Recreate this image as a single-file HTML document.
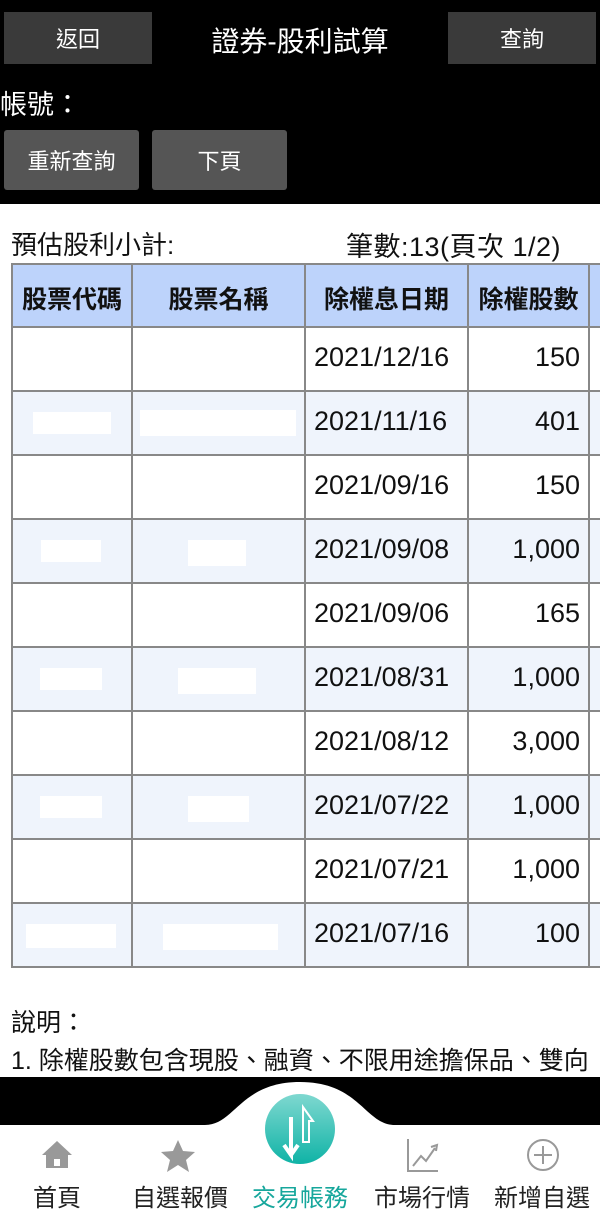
<!DOCTYPE html>
<html><head><meta charset="utf-8"><style>
*{margin:0;padding:0;box-sizing:border-box}
body{width:600px;height:1218px;background:#fff;position:relative;overflow:hidden;font-family:"Liberation Sans","Noto Sans CJK TC",sans-serif}
.a{position:absolute}
.btn{position:absolute;background:#3a3a3a;color:#fff;font-size:22px;display:flex;align-items:center;justify-content:center}
.btn2{position:absolute;background:#555;color:#fff;font-size:22px;display:flex;align-items:center;justify-content:center;border-radius:3px}
.v{position:absolute;top:263px;height:704px;width:2px;background:#888}
.h{position:absolute;left:11px;width:589px;height:2px;background:#888}
.row{position:absolute;left:11px;width:589px;height:64px}
.t{position:absolute;font-size:27px;color:#111}
.w{position:absolute;background:#fff}
.lab{position:absolute;top:1178px;font-size:23px;color:#222;width:120px;text-align:center}
</style></head><body>
<div class="a" style="left:0;top:0;width:600px;height:204px;background:#000"></div>
<div class="btn" style="left:4px;top:12px;width:148px;height:52px">返回</div>
<div class="a" style="left:150px;top:20px;width:300px;text-align:center;color:#fff;font-size:28px">證券-股利試算</div>
<div class="btn" style="left:448px;top:12px;width:148px;height:52px">查詢</div>
<div class="a" style="left:0;top:83px;color:#fff;font-size:27px">帳號：</div>
<div class="btn2" style="left:4px;top:130px;width:135px;height:60px">重新查詢</div>
<div class="btn2" style="left:152px;top:130px;width:135px;height:60px">下頁</div>
<div class="a" style="left:11px;top:225px;font-size:26px;color:#111">預估股利小計:</div>
<div class="a" style="left:346px;top:225px;font-size:27px;color:#111;letter-spacing:0.5px">筆數:13(頁次 1/2)</div>
<div class="a" style="left:11px;top:263px;width:589px;height:64px;background:#bdd3fb"></div>
<div class="row" style="top:390px;background:#eff4fc"></div>
<div class="row" style="top:518px;background:#eff4fc"></div>
<div class="row" style="top:646px;background:#eff4fc"></div>
<div class="row" style="top:774px;background:#eff4fc"></div>
<div class="row" style="top:902px;background:#eff4fc"></div>
<div class="w" style="left:33px;top:412px;width:78px;height:22px"></div>
<div class="w" style="left:140px;top:410px;width:156px;height:26px"></div>
<div class="w" style="left:41px;top:540px;width:60px;height:22px"></div>
<div class="w" style="left:188px;top:540px;width:58px;height:26px"></div>
<div class="w" style="left:40px;top:668px;width:62px;height:22px"></div>
<div class="w" style="left:178px;top:668px;width:78px;height:26px"></div>
<div class="w" style="left:40px;top:796px;width:62px;height:22px"></div>
<div class="w" style="left:188px;top:796px;width:61px;height:26px"></div>
<div class="w" style="left:26px;top:924px;width:90px;height:24px"></div>
<div class="w" style="left:163px;top:924px;width:115px;height:26px"></div>
<div class="v" style="left:11px"></div><div class="v" style="left:131px"></div><div class="v" style="left:304px"></div><div class="v" style="left:467px"></div><div class="v" style="left:588px"></div>
<div class="h" style="top:263px"></div><div class="h" style="top:326px"></div><div class="h" style="top:390px"></div><div class="h" style="top:454px"></div><div class="h" style="top:518px"></div><div class="h" style="top:582px"></div><div class="h" style="top:646px"></div><div class="h" style="top:710px"></div><div class="h" style="top:774px"></div><div class="h" style="top:838px"></div><div class="h" style="top:902px"></div><div class="h" style="top:966px"></div>
<div class="t" style="left:13px;top:280px;width:118px;text-align:center;font-weight:bold;font-size:25px">股票代碼</div>
<div class="t" style="left:133px;top:280px;width:171px;text-align:center;font-weight:bold;font-size:25px">股票名稱</div>
<div class="t" style="left:306px;top:280px;width:161px;text-align:center;font-weight:bold;font-size:25px">除權息日期</div>
<div class="t" style="left:469px;top:280px;width:119px;text-align:center;font-weight:bold;font-size:25px">除權股數</div>
<div class="t" style="left:314px;top:342px">2021/12/16</div><div class="t" style="left:469px;top:342px;width:111px;text-align:right">150</div>
<div class="t" style="left:314px;top:406px">2021/11/16</div><div class="t" style="left:469px;top:406px;width:111px;text-align:right">401</div>
<div class="t" style="left:314px;top:470px">2021/09/16</div><div class="t" style="left:469px;top:470px;width:111px;text-align:right">150</div>
<div class="t" style="left:314px;top:534px">2021/09/08</div><div class="t" style="left:469px;top:534px;width:111px;text-align:right">1,000</div>
<div class="t" style="left:314px;top:598px">2021/09/06</div><div class="t" style="left:469px;top:598px;width:111px;text-align:right">165</div>
<div class="t" style="left:314px;top:662px">2021/08/31</div><div class="t" style="left:469px;top:662px;width:111px;text-align:right">1,000</div>
<div class="t" style="left:314px;top:726px">2021/08/12</div><div class="t" style="left:469px;top:726px;width:111px;text-align:right">3,000</div>
<div class="t" style="left:314px;top:790px">2021/07/22</div><div class="t" style="left:469px;top:790px;width:111px;text-align:right">1,000</div>
<div class="t" style="left:314px;top:854px">2021/07/21</div><div class="t" style="left:469px;top:854px;width:111px;text-align:right">1,000</div>
<div class="t" style="left:314px;top:918px">2021/07/16</div><div class="t" style="left:469px;top:918px;width:111px;text-align:right">100</div>
<div class="a" style="left:11px;top:1003px;font-size:25px;color:#111">說明：</div>
<div class="a" style="left:11px;top:1041px;font-size:25px;color:#111;white-space:nowrap">1. 除權股數包含現股、融資、不限用途擔保品、雙向</div>
<div class="a" style="left:0;top:1077px;width:600px;height:50px;background:#000"></div>
<svg class="a" style="left:0;top:1077px" width="600" height="141"><path d="M0 48 L205 48 C235 48 240 5 300 5 C360 5 365 48 395 48 L600 48 L600 141 L0 141Z" fill="#fff"/>
<defs><linearGradient id="g" x1="0" y1="0" x2="0" y2="1"><stop offset="0" stop-color="#7fd8d0"/><stop offset="1" stop-color="#0fb3a6"/></linearGradient></defs>
<circle cx="300" cy="52" r="35" fill="url(#g)"/>
<path d="M291 40 V78 L284 68 M291 78 L298 68" stroke="#fff" stroke-width="4" fill="none"/>
<path d="M303 65 V30 L313 44 H309 V65Z" stroke="#fff" stroke-width="2" fill="none"/>
<path d="M42 78 L57 64 L72 78 H68 V91 H46 V78Z" fill="#999"/><rect x="54" y="82" width="6" height="7" fill="#fff"/>
<path d="M178 63 L183 74 L195 75 L186 83 L189 95 L178 88 L167 95 L170 83 L161 75 L173 74Z" fill="#999"/>
<path d="M408 62 V94 H438" stroke="#999" stroke-width="2" fill="none"/><path d="M413 89 L421 79 L426 84 L435 71 M431 70 L437 68 L436 74" stroke="#999" stroke-width="2" fill="none"/>
<circle cx="543" cy="78" r="15" stroke="#999" stroke-width="2" fill="none"/><path d="M543 69 V87 M534 78 H552" stroke="#999" stroke-width="2"/>
</svg>
<div class="lab" style="left:-3px;font-size:24px">首頁</div>
<div class="lab" style="left:120px;font-size:24px">自選報價</div>
<div class="lab" style="left:240px;color:#17a79c;font-size:24px">交易帳務</div>
<div class="lab" style="left:362px;font-size:24px">市場行情</div>
<div class="lab" style="left:482px;font-size:24px">新增自選</div>
</body></html>
